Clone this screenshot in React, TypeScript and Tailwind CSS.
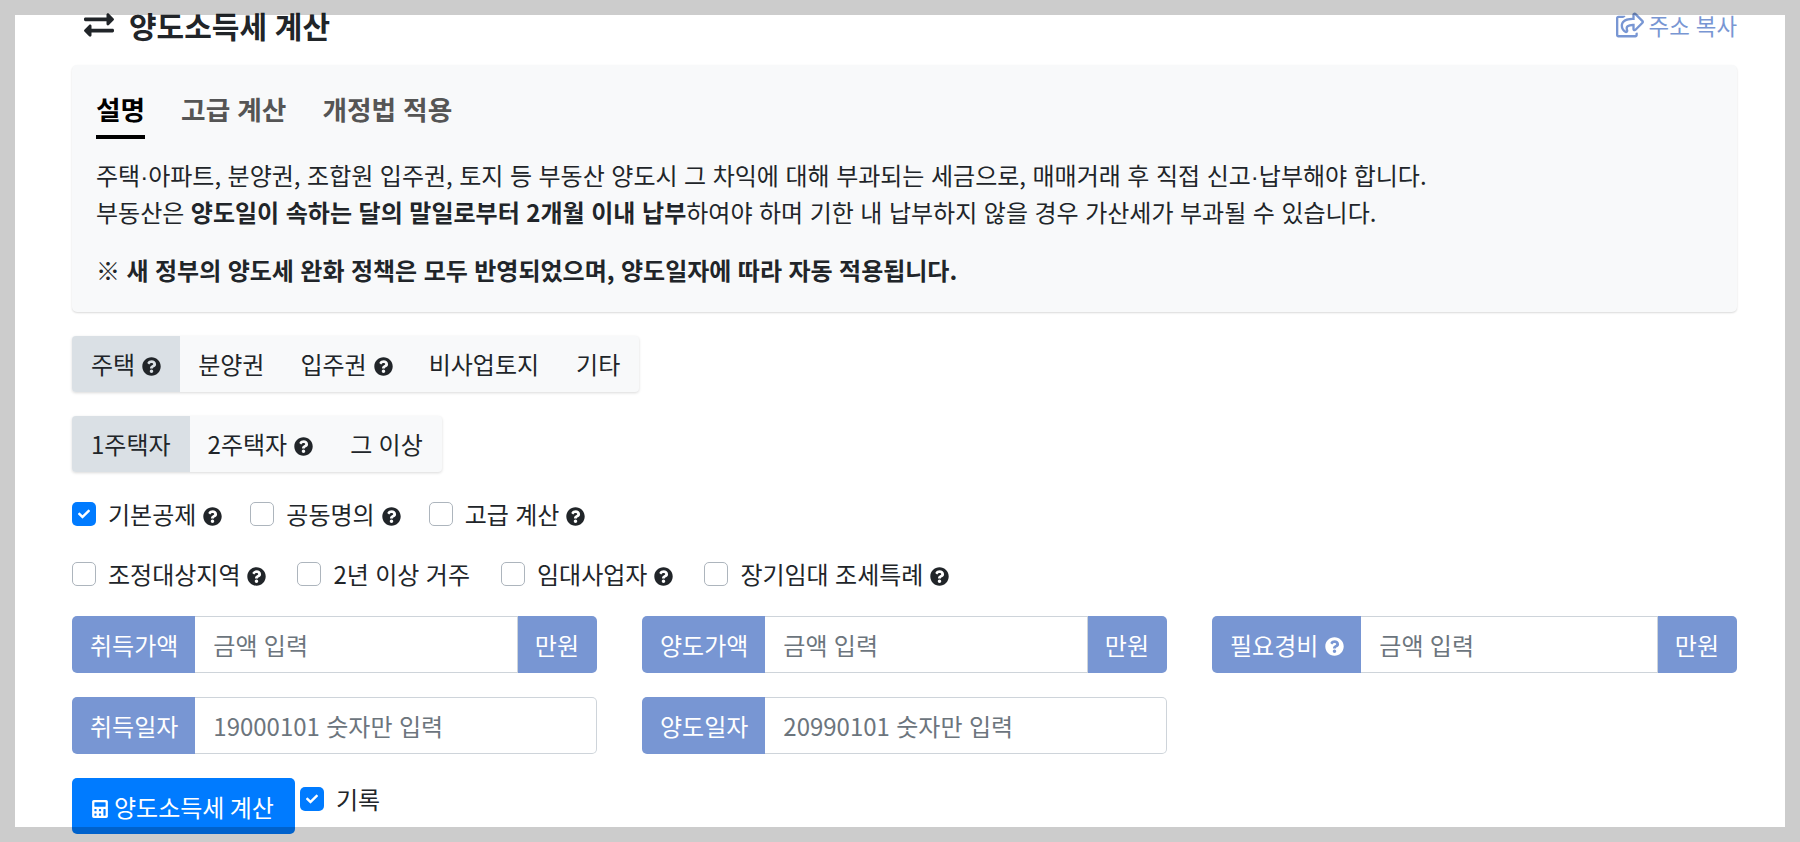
import { FaCalculator, FaCheck, FaExchangeAlt, FaQuestionCircle, FaRegShareSquare } from "react-icons/fa";

function Help({ className = "text-[#212529]" }: { className?: string }) {
  return <FaQuestionCircle className={`inline-block text-[19px] ml-[7px] mt-[4px] ${className}`} />;
}

function Segments({ items, className = "" }: { items: { label: string; help?: boolean }[]; className?: string }) {
  return (
    <div className={`inline-flex self-start h-[56px] rounded-[4px] bg-[#f8f9fa] shadow-[0_1px_3px_rgba(0,0,0,0.15)] ${className}`}>
      {items.map((item, i) => (
        <div
          key={item.label}
          className={`flex items-center text-[#212529] whitespace-nowrap ${
            i === 0 ? "px-[19px] bg-[#dae0e5] rounded-l-[4px]" : i === items.length - 1 ? "pl-[19px] pr-[19px]" : "px-[18px]"
          }`}
        >
          <span>{item.label}</span>
          {item.help && <Help />}
        </div>
      ))}
    </div>
  );
}

function Check({ label, help, checked }: { label: string; help?: boolean; checked?: boolean }) {
  return (
    <label className="flex items-center h-[24px] whitespace-nowrap">
      <span
        className={`flex items-center justify-center w-[24px] h-[24px] rounded-[5px] mr-[12px] ${
          checked ? "bg-[#007bff]" : "bg-white border border-[#adb5bd]"
        }`}
      >
        {checked && <FaCheck className="text-white text-[12px]" />}
      </span>
      <span>{label}</span>
      {help && <Help />}
    </label>
  );
}

function Field({
  label,
  placeholder,
  unit,
  help,
}: {
  label: string;
  placeholder: string;
  unit?: boolean;
  help?: boolean;
}) {
  return (
    <div className="flex h-[57px]">
      <div className="flex items-center pl-[18px] pr-[17px] bg-[#7896d3] text-white rounded-l-[5px] whitespace-nowrap">
        {label}
        {help && <Help className="text-white" />}
      </div>
      <div
        className={`flex-1 flex items-center pl-[18px] bg-white text-[#6c757d] border border-l-0 border-[#ced4da] ${
          unit ? "" : "rounded-r-[5px]"
        }`}
      >
        {placeholder}
      </div>
      {unit && (
        <div className="flex items-center pl-[17px] pr-[18px] bg-[#7896d3] text-white rounded-r-[5px] whitespace-nowrap">만원</div>
      )}
    </div>
  );
}

const Dot = () => <span className="font-['Liberation_Sans']">·</span>;

export default function App() {
  return (
    <div
      className="relative h-[842px] overflow-hidden bg-white text-[24px] leading-[36px] text-[#212529] [word-spacing:1px]"
      style={{ fontFamily: '"Noto Sans CJK KR", "Noto Sans", sans-serif' }}
    >
      <div className="pl-[72px] pr-[63px] flex flex-col">
        <div className="flex justify-between h-[65px] pt-[7px]">
          <h1 className="flex items-center h-[36px] text-[30px] font-bold text-[#212529]">
            <FaExchangeAlt className="text-[30px] ml-[12px] mr-[15px]" />
            양도소득세 계산
          </h1>
          <div className="flex items-center h-[36px] text-[22.4px] text-[#7896d3]">
            <FaRegShareSquare className="text-[28px] mr-[5px]" />
            주소 복사
          </div>
        </div>

        <div className="h-[247px] rounded-[5px] bg-[#f8f9fa] px-[24px] pt-[26px] shadow-[0_1px_2px_rgba(0,0,0,0.15)]">
          <div className="flex gap-[36px] text-[26.7px] font-bold text-[#555]">
            <div className="h-[48px] border-b-[4px] border-black text-black">설명</div>
            <div>고급 계산</div>
            <div>개정법 적용</div>
          </div>
          <p className="mt-[18px] leading-[35px] [word-spacing:1.15px]">
            주택<Dot />아파트, 분양권, 조합원 입주권, 토지 등 부동산 양도시 그 차익에 대해 부과되는 세금으로, 매매거래 후 직접 신고<Dot />납부해야 합니다.
            <br />
            부동산은 <b>양도일이 속하는 달의 말일로부터 2개월 이내 납부</b>하여야 하며 기한 내 납부하지 않을 경우 가산세가 부과될 수 있습니다.
          </p>
          <p className="mt-[23px] leading-[35px] font-bold">※ 새 정부의 양도세 완화 정책은 모두 반영되었으며, 양도일자에 따라 자동 적용됩니다.</p>
        </div>

        <Segments
          className="mt-[24px]"
          items={[
            { label: "주택", help: true },
            { label: "분양권" },
            { label: "입주권", help: true },
            { label: "비사업토지" },
            { label: "기타" },
          ]}
        />
        <Segments
          className="mt-[24px]"
          items={[{ label: "1주택자" }, { label: "2주택자", help: true }, { label: "그 이상" }]}
        />

        <div className="flex gap-[28px] mt-[30px]">
          <Check label="기본공제" help checked />
          <Check label="공동명의" help />
          <Check label="고급 계산" help />
        </div>
        <div className="flex gap-[31px] mt-[36px]">
          <Check label="조정대상지역" help />
          <Check label="2년 이상 거주" />
          <Check label="임대사업자" help />
          <Check label="장기임대 조세특례" help />
        </div>

        <div className="grid grid-cols-3 gap-x-[45px] gap-y-[24px] mt-[30px]">
          <Field label="취득가액" placeholder="금액 입력" unit />
          <Field label="양도가액" placeholder="금액 입력" unit />
          <Field label="필요경비" placeholder="금액 입력" unit help />
          <Field label="취득일자" placeholder="19000101 숫자만 입력" />
          <Field label="양도일자" placeholder="20990101 숫자만 입력" />
        </div>

        <div className="flex items-start mt-[24px]">
          <button className="flex items-center h-[56px] pl-[19px] pr-[21px] pt-[2px] rounded-[5px] bg-[#007bff] text-white">
            <FaCalculator className="text-[18px] mr-[5px] mt-[4px]" />
            양도소득세 계산
          </button>
          <div className="flex items-center ml-[5px] mt-[9px]">
            <Check label="기록" checked />
          </div>
        </div>
      </div>

      <div className="absolute inset-0 border-[15px] border-[rgba(0,0,0,0.2)] pointer-events-none" />
    </div>
  );
}
